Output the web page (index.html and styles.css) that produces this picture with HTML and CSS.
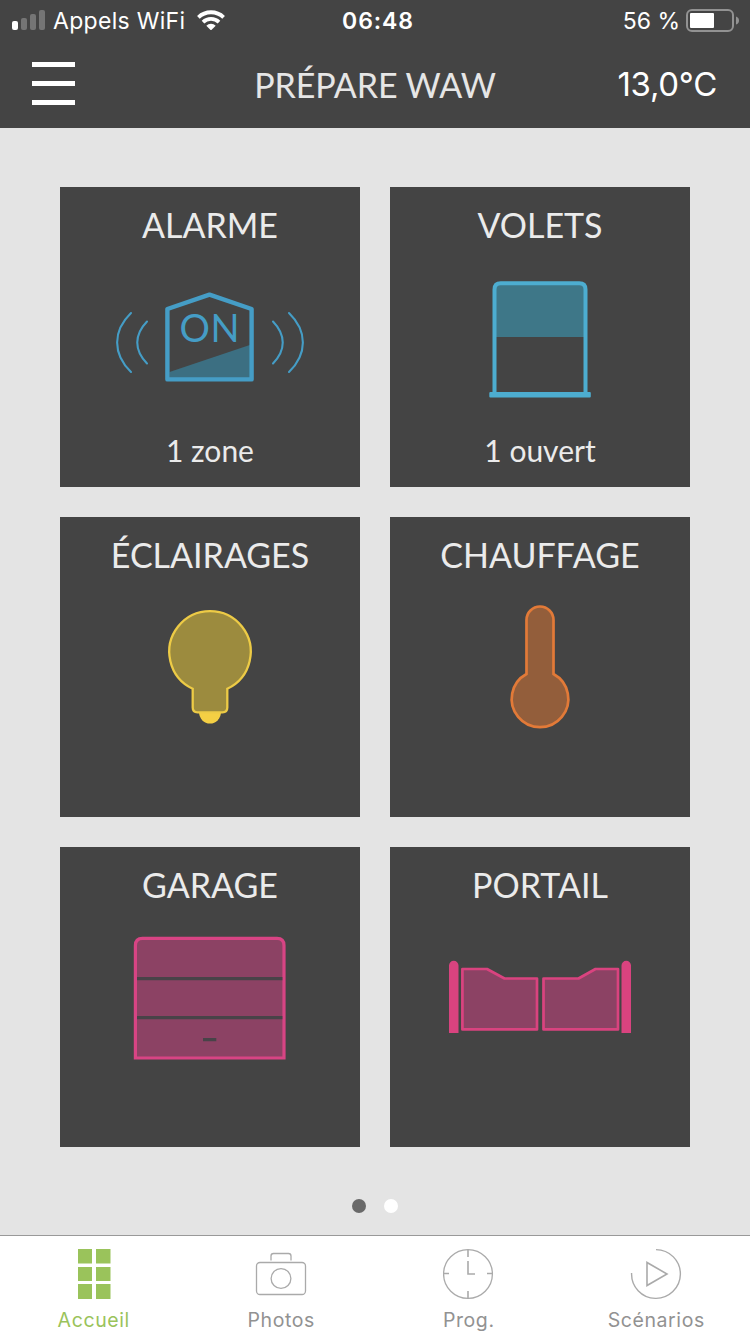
FILE: index.html
```html
<!DOCTYPE html>
<html lang="fr">
<head>
<meta charset="utf-8">
<title>Prépare WAW</title>
<link rel="stylesheet" href="styles.css">
</head>
<body>
<div class="app">
  <header class="header">
    <div class="status">
      <div class="status-left">
        <svg class="signal" width="34" height="20" viewBox="0 0 34 20">
          <rect x="0" y="11" width="6" height="9" rx="2" fill="#fff"/>
          <g fill="#757575"><rect x="9" y="8" width="6" height="12" rx="2"/><rect x="18" y="4" width="6" height="16" rx="2"/><rect x="27" y="0" width="6" height="20" rx="2"/></g>
        </svg>
        <span class="carrier">Appels WiFi</span>
        <svg class="wifi" width="28" height="20" viewBox="0 0 28 20">
          <g fill="none" stroke="#fff" stroke-width="3.8"><path d="M1.4 7.3 A18.3 18.3 0 0 1 26.6 7.3"/><path d="M6 12.1 A11.7 11.7 0 0 1 22 12.1"/></g>
          <path d="M9.3 15.7 A6.8 6.8 0 0 1 18.7 15.7 L14 20.4 Z" fill="#fff"/>
        </svg>
      </div>
      <span class="clock">06:48</span>
      <div class="status-right">
        <span class="percent">56 %</span>
        <svg class="battery" width="54" height="24" viewBox="0 0 54 24">
          <rect x="1" y="1" width="46" height="21" rx="5" fill="none" stroke="#929292" stroke-width="2"/>
          <rect x="4" y="4" width="24" height="15" rx="1" fill="#fff"/>
          <path d="M50 7.5 Q53 8.5 53 11.5 T50 15.5 Z" fill="#929292"/>
        </svg>
      </div>
    </div>
    <div class="navbar">
      <div class="menu"><i></i><i></i><i></i></div>
      <h1 class="page-title">PRÉPARE WAW</h1>
      <span class="temperature">13,0°C</span>
    </div>
  </header>

  <main class="tiles">
    <section class="tile">
      <h2>ALARME</h2>
      <svg class="art" viewBox="0 78 300 150">
        <path d="M109.500 185 L190.500 157.800 V192 H109.500 Z" fill="#3c6f82"/>
        <path d="M107.400 122 L149.500 107.600 L191.600 122 V192.400 H107.400 Z" fill="none" stroke="#459dc6" stroke-width="4.400" stroke-linejoin="round"/>
        <text x="119.500" y="155.300" class="on" textLength="60" lengthAdjust="spacing">ON</text>
        <g fill="none" stroke="#459dc6" stroke-width="2.100" stroke-linecap="round"><path d="M71 126 C52.500 144 52.500 167 71 185"/><path d="M87 134.500 C74 148 74 163 87 176.500"/><path d="M213 134.500 C226 148 226 163 213 176.500"/><path d="M229 126 C247.500 144 247.500 167 229 185"/></g>
      </svg>
      <p>1 zone</p>
    </section>
    <section class="tile">
      <h2>VOLETS</h2>
      <svg class="art" viewBox="0 78 300 150">
        <path d="M105 96 H195 V150 H105 Z" fill="#3e7788"/>
        <path d="M104.500 205 V102.500 Q104.500 96.300 110.700 96.300 H189.300 Q195.500 96.300 195.500 102.500 V205" fill="none" stroke="#4dadd0" stroke-width="4"/>
        <rect x="99.300" y="205" width="101.500" height="5.500" rx="1" fill="#4dadd0"/>
      </svg>
      <p>1 ouvert</p>
    </section>
    <section class="tile">
      <h2>ÉCLAIRAGES</h2>
      <svg class="art" viewBox="0 78 300 150">
        <path d="M139 195 H161 A11 11.500 0 0 1 139 195 Z" fill="#f4cf44"/>
        <path d="M132.700 171.700 A40.700 40.700 0 1 1 167.300 171.700 V190.500 Q167.300 195.300 162.500 195.300 H137.500 Q132.700 195.300 132.700 190.500 Z" fill="#9c8b3e" stroke="#edcb46" stroke-width="2.300"/>
      </svg>
    </section>
    <section class="tile">
      <h2>CHAUFFAGE</h2>
      <svg class="art" viewBox="0 78 300 150">
        <path d="M136.500 157 V103 A13.500 13.500 0 0 1 163.500 103 V157 A28.300 28.300 0 1 1 136.500 157 Z" fill="#935e3b" stroke="#e27a38" stroke-width="2.700"/>
      </svg>
    </section>
    <section class="tile">
      <h2>GARAGE</h2>
      <svg class="art" viewBox="0 78 300 150">
        <path d="M75.400 211 V98.500 Q75.400 91.400 82.500 91.400 H217 Q224 91.400 224 98.500 V211 Z" fill="#8c4264" stroke="#d84484" stroke-width="3.200"/>
        <path d="M77 131.700 H222.400 M77 170.700 H222.400 M143 192.700 H156.300" stroke="#484348" stroke-width="3.200"/>
      </svg>
    </section>
    <section class="tile">
      <h2>PORTAIL</h2>
      <svg class="art" viewBox="0 78 300 150">
        <path d="M59 186 V118.500 A4.750 4.750 0 0 1 68.500 118.500 V186 Z M231.500 186 V118.500 A4.750 4.750 0 0 1 241 118.500 V186 Z" fill="#d9437f"/>
        <g fill="#8c4264" stroke="#d9437f" stroke-width="2.700" stroke-linejoin="round"><path d="M72.400 122 H97 L114.500 131.500 H147 V182.400 H72.400 Z"/><path d="M228 122 H205.500 L188.500 131.500 H153.500 V182.400 H228 Z"/></g>
      </svg>
    </section>
  </main>

  <div class="pager"><i class="current"></i><i></i></div>

  <nav class="tabs">
    <a class="tab active">
      <svg viewBox="0 0 52 52"><path d="M10 1h14v14.500H10z M28 1h14.500v14.500H28z M10 19h14v14H10z M28 19h14.500v14H28z M10 36h14v15H10z M28 36h14.500v15H28z" fill="#9ac35b"/></svg>
      <span>Accueil</span>
    </a>
    <a class="tab">
      <svg viewBox="0 0 52 52"><g fill="none" stroke="#aaa" stroke-width="1.300"><rect x="1.500" y="14.500" width="49" height="32" rx="3.500"/><path d="M16 12.500 V8 Q16 5.500 18.500 5.500 H33.500 Q36 5.500 36 8 V12.500"/><circle cx="26" cy="30.500" r="9.900"/></g></svg>
      <span>Photos</span>
    </a>
    <a class="tab">
      <svg viewBox="1 0 52 52"><g fill="none" stroke="#aaa" stroke-width="1.300"><circle cx="26" cy="26" r="24.400"/><path d="M26 2 V9 M26 43 V50 M2 25.500 H7 M45 25.500 H50" stroke-width="1.600"/><path d="M26 13 V26 H33" stroke-width="1.600"/></g></svg>
      <span>Prog.</span>
    </a>
    <a class="tab">
      <svg viewBox="0 0 52 52"><g fill="none" stroke="#aaa" stroke-width="1.400"><path d="M26 1.600 A24.400 24.400 0 1 1 1.600 25"/><path d="M17 14.500 V37.500 L37 26 Z" stroke-width="1.600"/></g></svg>
      <span>Scénarios</span>
    </a>
  </nav>
</div>
</body>
</html>
```
FILE: styles.css
```css
* { box-sizing: border-box; }
body { margin: 0; background: #e4e4e4; }
.app { width: 750px; height: 1334px; display: flex; flex-direction: column; overflow: hidden; font-family: Inter, "Liberation Sans", sans-serif; }
svg { display: block; flex: none; }
span, h1, h2, p { white-space: nowrap; }

.header { height: 128px; background: #444; color: #fff; display: flex; flex-direction: column; flex: none; }
.status { height: 40px; padding: 0 10px 0 12px; display: grid; grid-template-columns: 1fr auto 1fr; align-items: center; font-size: 23px; line-height: 38px; }
.status span { padding-top: 2px; }
.status-left { display: flex; align-items: center; }
.status-left .carrier { width: 144px; padding-left: 7px; letter-spacing: 0.3px; }
.wifi { margin-left: 7px; }
.clock { font-weight: 600; letter-spacing: 0.9px; margin-left: 4px; }
.status-right { display: flex; align-items: center; justify-content: flex-end; gap: 6px; }
.battery { margin-top: 1px; }

.navbar { height: 88px; padding: 0 33px 0 32px; display: grid; grid-template-columns: 1fr auto 1fr; align-items: center; }
.menu { width: 43px; height: 43px; margin-bottom: 1px; display: flex; flex-direction: column; justify-content: space-between; }
.menu i { height: 5px; background: #fff; }
.page-title { margin: 2px 0 0 1px; font: 400 34px/44px Lato, sans-serif; letter-spacing: -0.1px; color: #e6e6e6; }
.temperature { justify-self: end; font-size: 33px; letter-spacing: -0.3px; line-height: 44px; }

.tiles { padding: 59px 60px 0; display: grid; grid-template-columns: 300px 300px; grid-auto-rows: 300px; gap: 30px; flex: none; }
.tile { background: #444; color: #ebebeb; font-family: Lato, sans-serif; display: flex; flex-direction: column; align-items: center; }
.tile h2 { margin: 0; height: 78px; font-size: 34px; line-height: 76px; font-weight: 400; }
.tile p { margin: 14px 0 0; font-size: 30px; line-height: 42px; }
.art { width: 300px; height: 150px; }
.on { font: 400 38px Lato, sans-serif; fill: #459dc6; }

.pager { height: 88px; padding-top: 30px; display: flex; justify-content: center; align-items: center; gap: 18px; flex: none; }
.pager i { width: 14px; height: 14px; border-radius: 50%; background: #fff; }
.pager .current { background: #696969; }

.tabs { height: 99px; background: #fff; border-top: 1px solid #999; display: grid; grid-template-columns: repeat(4, 1fr); flex: none; }
.tab { display: flex; flex-direction: column; align-items: center; padding-top: 12px; color: #929292; font-size: 19.5px; line-height: 26px; letter-spacing: 0.6px; }
.tab svg { width: 52px; height: 52px; }
.tab span { margin-top: 7px; }
.tab.active { color: #9ac35b; }
```
